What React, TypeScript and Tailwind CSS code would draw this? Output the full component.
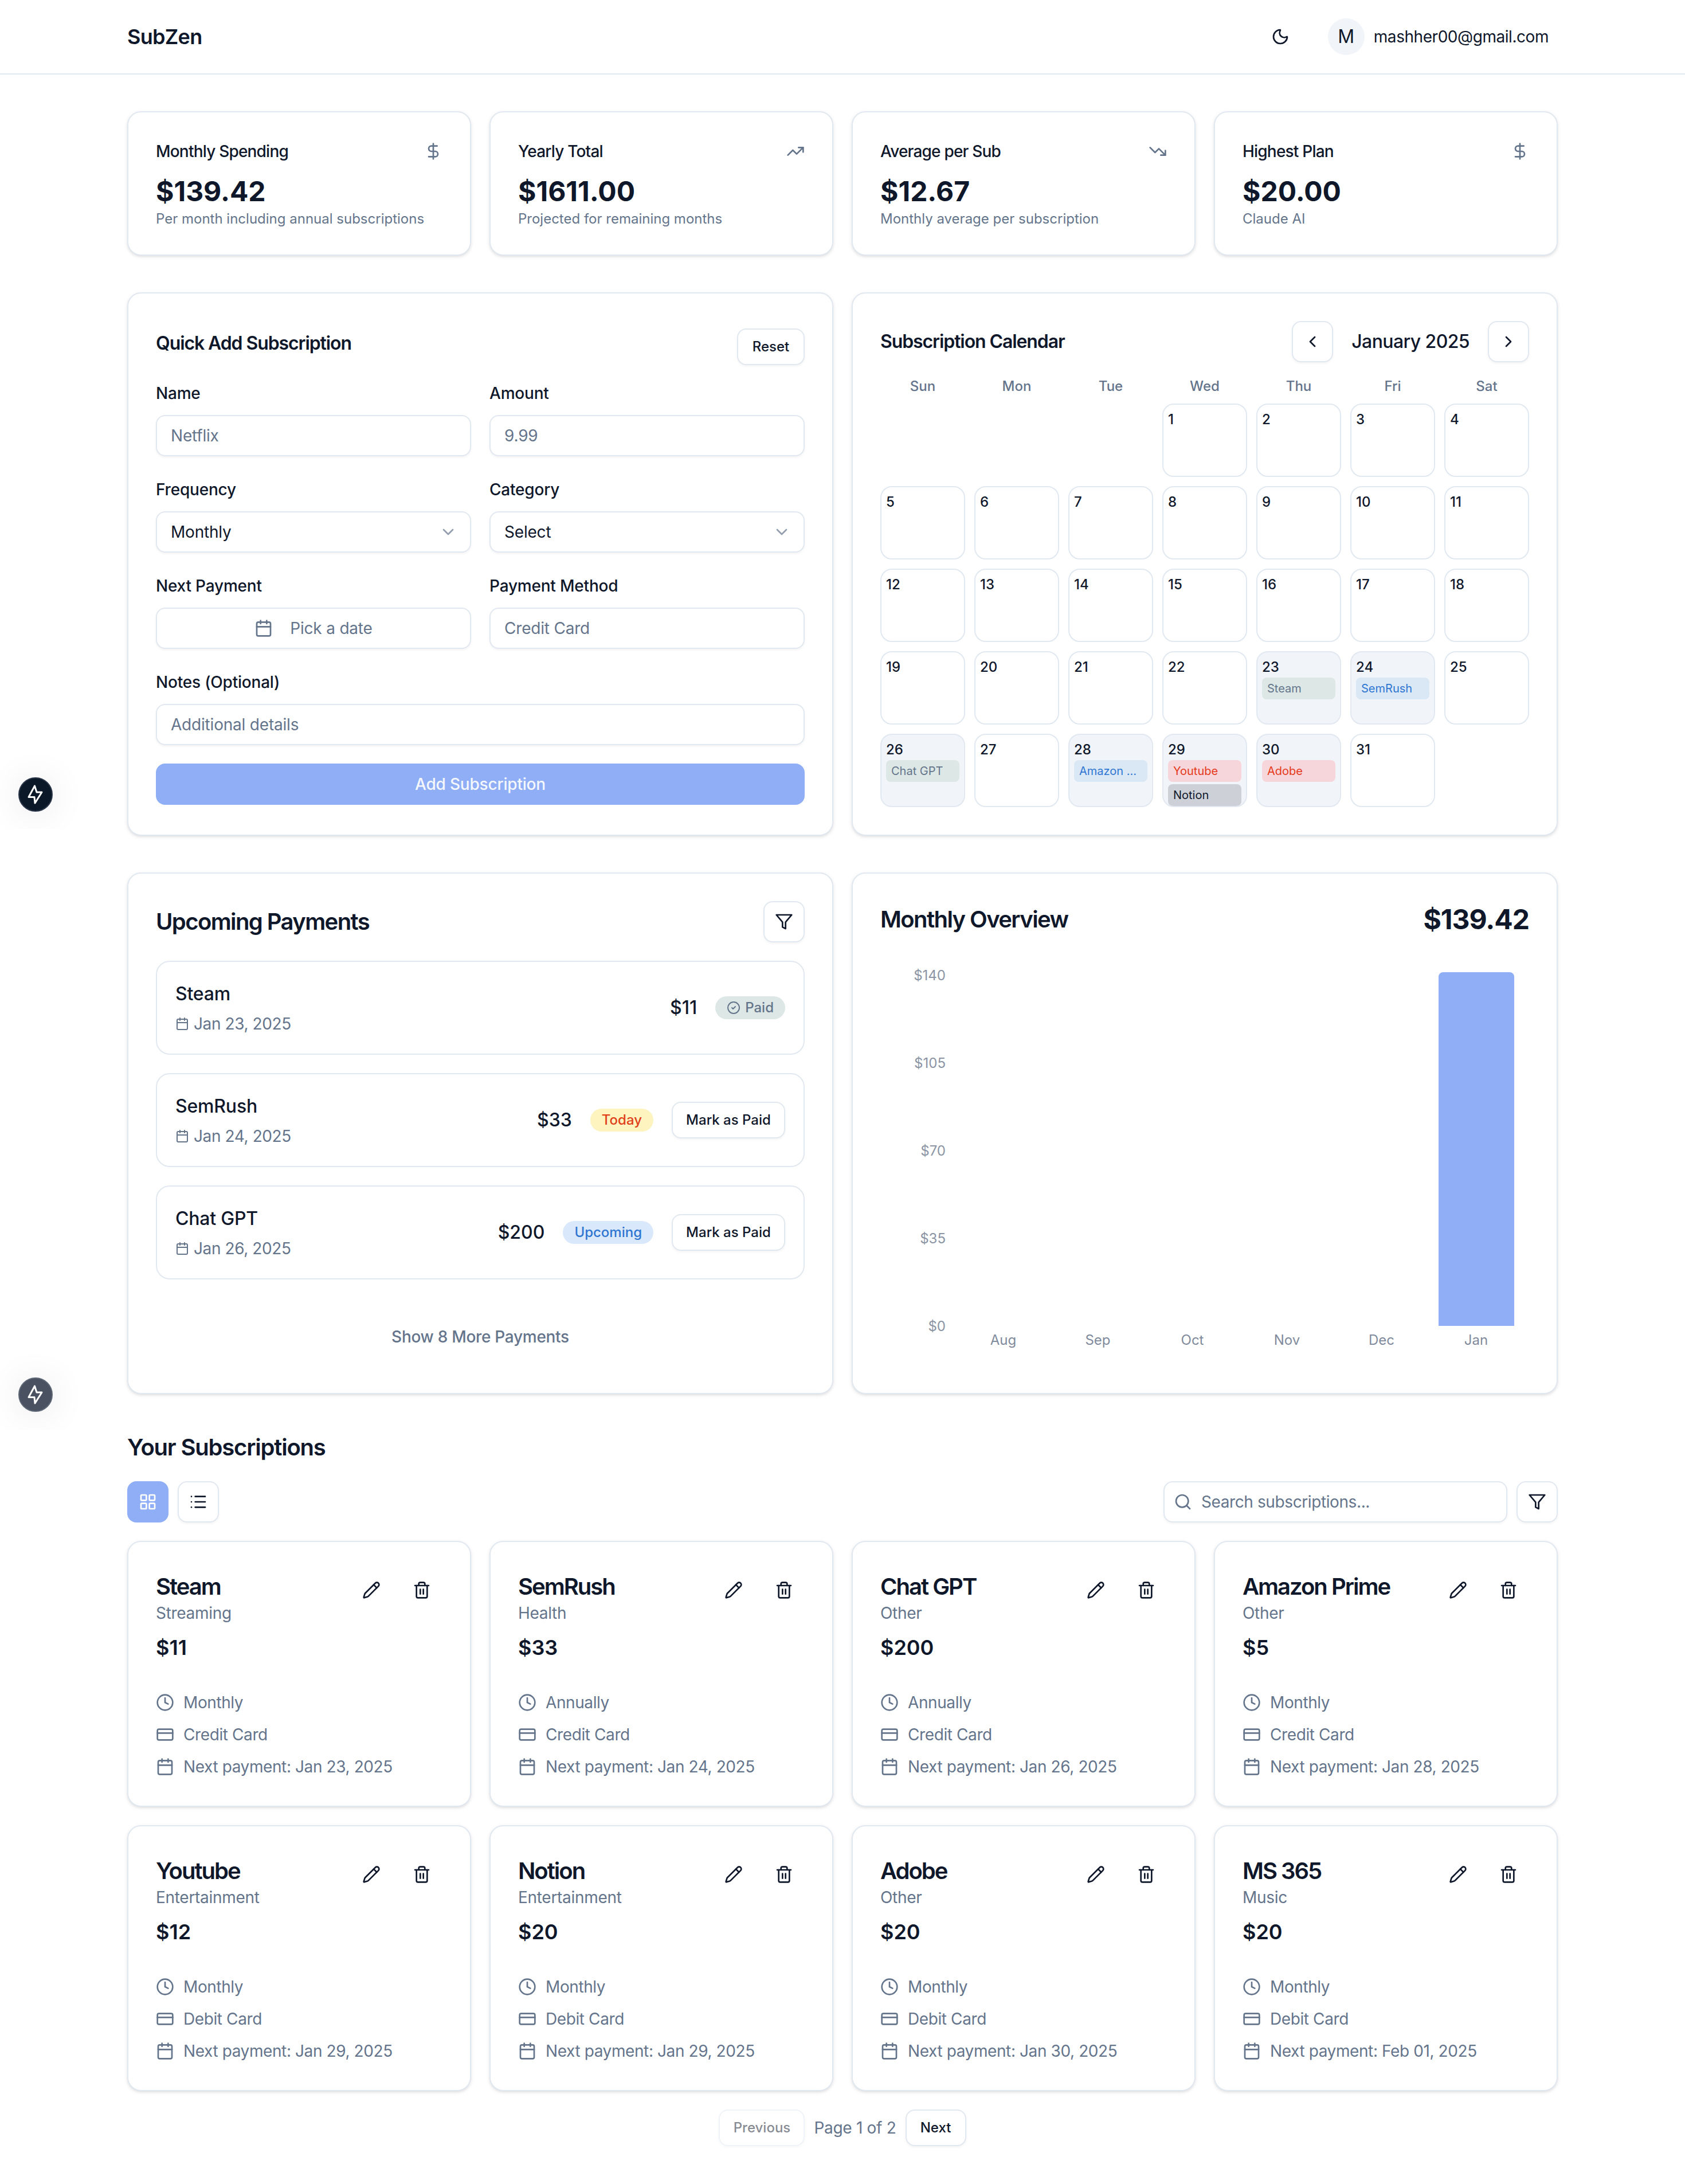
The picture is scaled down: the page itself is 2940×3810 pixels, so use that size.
import {
  Calendar,
  ChevronDown,
  ChevronLeft,
  ChevronRight,
  CircleCheck,
  Clock,
  CreditCard,
  DollarSign,
  LayoutGrid,
  List,
  Moon,
  Pencil,
  Search,
  Trash2,
  TrendingDown,
  TrendingUp,
} from 'lucide-react'

const card = 'rounded-[24px] border-2 border-[#e2e8f0] bg-white shadow-[0_2px_6px_rgba(15,23,42,0.1),0_2px_4px_-2px_rgba(15,23,42,0.1)]'
const control = 'rounded-[16px] border-2 border-[#e2e8f0] bg-white shadow-[0_2px_4px_rgba(15,23,42,0.05)]'
const inputClass = `${control} h-[72px] w-full px-6 text-[28px] tracking-[-0.2px] text-[#0f172a] outline-none placeholder:text-[#64748b]`

const stats = [
  {title: 'Monthly Spending', value: '$139.42', note: 'Per month including annual subscriptions', Icon: DollarSign},
  {title: 'Yearly Total', value: '$1611.00', note: 'Projected for remaining months', Icon: TrendingUp},
  {title: 'Average per Sub', value: '$12.67', note: 'Monthly average per subscription', Icon: TrendingDown},
  {title: 'Highest Plan', value: '$20.00', note: 'Claude AI', Icon: DollarSign},
]

const chipStyles = {
  green: 'bg-[#dde8e6] text-[#64748b]',
  blue: 'bg-[#dae8f6] text-[#2f76d2]',
  red: 'bg-[#f6d6da] text-[#e5391a]',
  gray: 'bg-[#cdd1d7] text-[#0f172a]',
}

const events: Record<number, {name: string; tone: keyof typeof chipStyles}[]> = {
  23: [{name: 'Steam', tone: 'green'}],
  24: [{name: 'SemRush', tone: 'blue'}],
  26: [{name: 'Chat GPT', tone: 'green'}],
  28: [{name: 'Amazon ...', tone: 'blue'}],
  29: [
    {name: 'Youtube', tone: 'red'},
    {name: 'Notion', tone: 'gray'},
  ],
  30: [{name: 'Adobe', tone: 'red'}],
}

const subscriptions = [
  {name: 'Steam', category: 'Streaming', price: '$11', frequency: 'Monthly', method: 'Credit Card', next: 'Jan 23, 2025'},
  {name: 'SemRush', category: 'Health', price: '$33', frequency: 'Annually', method: 'Credit Card', next: 'Jan 24, 2025'},
  {name: 'Chat GPT', category: 'Other', price: '$200', frequency: 'Annually', method: 'Credit Card', next: 'Jan 26, 2025'},
  {name: 'Amazon Prime', category: 'Other', price: '$5', frequency: 'Monthly', method: 'Credit Card', next: 'Jan 28, 2025'},
  {name: 'Youtube', category: 'Entertainment', price: '$12', frequency: 'Monthly', method: 'Debit Card', next: 'Jan 29, 2025'},
  {name: 'Notion', category: 'Entertainment', price: '$20', frequency: 'Monthly', method: 'Debit Card', next: 'Jan 29, 2025'},
  {name: 'Adobe', category: 'Other', price: '$20', frequency: 'Monthly', method: 'Debit Card', next: 'Jan 30, 2025'},
  {name: 'MS 365', category: 'Music', price: '$20', frequency: 'Monthly', method: 'Debit Card', next: 'Feb 01, 2025'},
]

function FilterIcon() {
  return (
    <svg viewBox="0 0 24 24" fill="none" stroke="currentColor" strokeWidth={2} strokeLinecap="round" strokeLinejoin="round" className="h-8 w-8">
      <polygon points="22 3 2 3 10 12.46 10 19 14 21 14 12.46 22 3" />
    </svg>
  )
}

function Bolt({wrapperClass, circleClass}: {wrapperClass: string; circleClass: string}) {
  return (
    <div className={`absolute left-0 h-[161px] w-[180px] overflow-hidden ${wrapperClass}`}>
      <div className={`absolute left-8 top-[70px] flex h-[60px] w-[60px] items-center justify-center rounded-full border-2 shadow-[0_4px_64px_rgba(0,0,0,0.1)] ${circleClass}`}>
        <svg viewBox="0 0 60 60" fill="none" stroke="white" strokeWidth={3} strokeLinejoin="round" className="h-[60px] w-[60px] shrink-0">
          <polygon points="28.5,15 18,34.5 28,34.5 29,45 41,26 32,26" />
        </svg>
      </div>
    </div>
  )
}

function Field({label, children}: {label: string; children: React.ReactNode}) {
  return (
    <div>
      <div className="mb-5 text-[28px] font-medium leading-[36px] tracking-[-0.2px] text-[#0f172a]">{label}</div>
      {children}
    </div>
  )
}

function SelectBox({value}: {value: string}) {
  return (
    <div className={`${control} flex h-[72px] items-center justify-between px-6 text-[28px] tracking-[-0.2px] text-[#0f172a]`}>
      {value}
      <ChevronDown className="-mr-[2px] h-8 w-8 text-[#64748b] opacity-70" />
    </div>
  )
}

function QuickAdd() {
  return (
    <div className={`${card} p-12`}>
      <div className="flex h-[108px] items-start justify-between">
        <h3 className="mt-[15px] text-[32px] font-semibold leading-[48px] tracking-[-1.1px] text-[#0f172a]">Quick Add Subscription</h3>
        <button className={`${control} mt-[13px] h-16 w-[118px] text-[24px] font-medium text-[#0f172a]`}>Reset</button>
      </div>
      <div className="grid grid-cols-2 gap-x-8 gap-y-10">
        <Field label="Name">
          <input className={inputClass} placeholder="Netflix" />
        </Field>
        <Field label="Amount">
          <input className={inputClass} placeholder="9.99" />
        </Field>
        <Field label="Frequency">
          <SelectBox value="Monthly" />
        </Field>
        <Field label="Category">
          <SelectBox value="Select" />
        </Field>
        <Field label="Next Payment">
          <div className={`${control} flex h-[72px] items-center justify-center gap-[30px] text-[28px] tracking-[-0.2px] text-[#64748b]`}>
            <Calendar className="h-8 w-8" />
            Pick a date
          </div>
        </Field>
        <Field label="Payment Method">
          <input className={inputClass} placeholder="Credit Card" />
        </Field>
        <div className="col-span-2">
          <Field label="Notes (Optional)">
            <input className={inputClass} placeholder="Additional details" />
          </Field>
        </div>
      </div>
      <button className="mt-8 h-[72px] w-full rounded-[16px] bg-[#8faef5] text-[28px] font-medium tracking-[-0.2px] text-[#f4f7fe]">Add Subscription</button>
    </div>
  )
}

function CalendarCard() {
  const days: (number | null)[] = [null, null, null, ...Array.from({length: 31}, (_, i) => i + 1)]
  return (
    <div className={`${card} p-12`}>
      <div className="flex h-[72px] items-center justify-between">
        <h3 className="text-[32px] font-semibold tracking-[-1.1px] text-[#0f172a]">Subscription Calendar</h3>
        <div className="flex items-center gap-8">
          <button className={`${control} flex h-[72px] w-[72px] items-center justify-center text-[#0f172a]`}>
            <ChevronLeft className="h-8 w-8" />
          </button>
          <span className="text-[32px] font-medium tracking-[-0.6px] text-[#0f172a]">January 2025</span>
          <button className={`${control} flex h-[72px] w-[72px] items-center justify-center text-[#0f172a]`}>
            <ChevronRight className="h-8 w-8" />
          </button>
        </div>
      </div>
      <div className="mb-[14px] mt-[26px] grid grid-cols-7 gap-4">
        {['Sun', 'Mon', 'Tue', 'Wed', 'Thu', 'Fri', 'Sat'].map((d) => (
          <div key={d} className="text-center text-[24px] font-medium leading-[32px] text-[#64748b]">
            {d}
          </div>
        ))}
      </div>
      <div className="grid grid-cols-7 gap-4">
        {days.map((d, i) =>
          d === null ? (
            <div key={i} />
          ) : (
            <div key={i} className={`h-32 overflow-hidden rounded-[20px] border-2 border-[#e2e8f0] px-2 pt-[10px] ${events[d] ? 'bg-[#f1f5f9]' : 'bg-white'}`}>
              <div className="text-[24px] font-medium leading-[32px] text-[#0f172a]">{d}</div>
              {events[d] && (
                <div className="mt-[2px] flex flex-col gap-1">
                  {events[d].map((e) => (
                    <div key={e.name} className={`h-[38px] shrink-0 truncate rounded-[8px] px-[9px] text-[20px] leading-[38px] ${chipStyles[e.tone]}`}>
                      {e.name}
                    </div>
                  ))}
                </div>
              )}
            </div>
          ),
        )}
      </div>
    </div>
  )
}

function PaymentRow({name, date, amount, badge}: {name: string; date: string; amount: string; badge: React.ReactNode}) {
  return (
    <div className="flex items-center justify-between rounded-[24px] border-2 border-[#e2e8f0] bg-white p-8">
      <div>
        <div className="text-[32px] font-medium leading-[48px] tracking-[-0.2px] text-[#0f172a]">{name}</div>
        <div className="mt-2 flex items-center gap-2 text-[28px] leading-[40px] tracking-[-0.4px] text-[#64748b]">
          <Calendar className="h-6 w-6" />
          {date}
        </div>
      </div>
      <div className="flex items-center gap-8">
        <span className="text-[32px] font-medium text-[#0f172a]">{amount}</span>
        {badge}
      </div>
    </div>
  )
}

function MarkPaid({children}: {children: React.ReactNode}) {
  return (
    <>
      {children}
      <button className={`${control} h-16 w-[198px] text-[24px] font-medium text-[#0f172a]`}>Mark as Paid</button>
    </>
  )
}

function Upcoming() {
  return (
    <div className={`${card} p-12`}>
      <div className="flex h-[72px] items-center justify-between">
        <h2 className="text-[40px] font-semibold tracking-[-1.6px] text-[#0f172a]">Upcoming Payments</h2>
        <button className={`${control} flex h-[72px] w-[72px] items-center justify-center text-[#0f172a]`}>
          <FilterIcon />
        </button>
      </div>
      <div className="mt-8 flex flex-col gap-8">
        <PaymentRow
          name="Steam"
          date="Jan 23, 2025"
          amount="$11"
          badge={
            <span className="flex h-10 items-center gap-2 rounded-full bg-[#dde8e6] px-5 text-[24px] font-medium text-[#64748b]">
              <CircleCheck className="h-6 w-6" />
              Paid
            </span>
          }
        />
        <PaymentRow
          name="SemRush"
          date="Jan 24, 2025"
          amount="$33"
          badge={
            <MarkPaid>
              <span className="flex h-10 items-center rounded-full bg-[#fdf4c0] px-5 text-[24px] font-medium text-[#e0401a]">Today</span>
            </MarkPaid>
          }
        />
        <PaymentRow
          name="Chat GPT"
          date="Jan 26, 2025"
          amount="$200"
          badge={
            <MarkPaid>
              <span className="flex h-10 items-center rounded-full bg-[#d9e8fa] px-5 text-[24px] font-medium text-[#2f76d2]">Upcoming</span>
            </MarkPaid>
          }
        />
      </div>
      <div className="mt-16 flex h-[72px] items-center justify-center text-[28px] font-medium tracking-[-0.3px] text-[#64748b]">Show 8 More Payments</div>
    </div>
  )
}

function Overview() {
  const months = ['Aug', 'Sep', 'Oct', 'Nov', 'Dec', 'Jan']
  return (
    <div className={`${card} h-[910px] p-12`}>
      <div className="flex h-16 items-center justify-between">
        <h2 className="text-[40px] font-semibold tracking-[-1.6px] text-[#0f172a]">Monthly Overview</h2>
        <span className="text-[48px] font-bold tracking-[-1px] text-[#0f172a]">$139.42</span>
      </div>
      <div className="mt-[52px] flex">
        <div className="flex h-[640px] w-[114px] flex-col justify-between text-right text-[24px] leading-[28px] text-[#8b94a3]">
          {['$140', '$105', '$70', '$35', '$0'].map((t) => (
            <div key={t}>{t}</div>
          ))}
        </div>
        <div className="ml-[18px] w-[990px] pt-2">
          <div className="grid h-[617px] grid-cols-6 items-end">
            {months.map((m) => (
              <div key={m} className="flex justify-center">
                {m === 'Jan' && <div className="h-[617px] w-[132px] rounded-t-[8px] bg-[#8faef5]" />}
              </div>
            ))}
          </div>
          <div className="mt-[11px] grid grid-cols-6 text-center text-[24px] leading-[28px] text-[#7f8a9c]">
            {months.map((m) => (
              <div key={m}>{m}</div>
            ))}
          </div>
        </div>
      </div>
    </div>
  )
}

function SubscriptionCard({sub}: {sub: (typeof subscriptions)[number]}) {
  return (
    <div className={`${card} h-[464px] p-12`}>
      <div className="flex items-start justify-between">
        <div className="pt-[2px]">
          <div className="text-[40px] font-semibold leading-[56px] tracking-[-2px] text-[#0f172a]">{sub.name}</div>
          <div className="-mt-[2px] text-[28px] leading-[40px] tracking-[-0.3px] text-[#64748b]">{sub.category}</div>
        </div>
        <div className="flex gap-4 text-[#0f172a]">
          <button className="flex h-[72px] w-[72px] items-center justify-center">
            <Pencil className="h-8 w-8" />
          </button>
          <button className="flex h-[72px] w-[72px] items-center justify-center">
            <Trash2 className="h-8 w-8" />
          </button>
        </div>
      </div>
      <div className="mt-3 text-[36px] font-semibold leading-[56px] text-[#0f172a]">{sub.price}</div>
      <div className="mt-12 flex flex-col gap-4 text-[28px] leading-[40px] tracking-[-0.4px] text-[#64748b]">
        <div className="flex items-center gap-4">
          <Clock className="h-8 w-8" />
          {sub.frequency}
        </div>
        <div className="flex items-center gap-4">
          <CreditCard className="h-8 w-8" />
          {sub.method}
        </div>
        <div className="flex items-center gap-4">
          <Calendar className="h-8 w-8" />
          Next payment: {sub.next}
        </div>
      </div>
    </div>
  )
}

export default function App() {
  return (
    <div className="relative min-h-[3810px] bg-white [font-family:Inter,sans-serif]">
      <header className="h-[130px] border-b-2 border-[#e2e8f0]">
        <div className="mx-auto flex h-full max-w-[2560px] items-center justify-between px-8">
          <span className="text-[36px] font-semibold tracking-[-0.7px] text-[#0f172a]">SubZen</span>
          <div className="flex items-center text-[#0f172a]">
            <button className="flex h-[72px] w-[72px] items-center justify-center">
              <Moon className="h-8 w-8" />
            </button>
            <div className="ml-[47px] flex h-16 w-16 items-center justify-center rounded-full bg-[#f1f5f9] text-[32px]">M</div>
            <span className="ml-4 pr-4 text-[28px] tracking-[-0.45px]">mashher00@gmail.com</span>
          </div>
        </div>
      </header>

      <main className="mx-auto flex max-w-[2560px] flex-col gap-16 px-8 py-16">
        <div className="grid grid-cols-4 gap-8">
          {stats.map(({title, value, note, Icon}) => (
            <div key={title} className={`${card} h-[252px] p-12`}>
              <div className="flex h-10 items-center justify-between">
                <span className="text-[28px] font-medium tracking-[-0.8px] text-[#0f172a]">{title}</span>
                <Icon className="h-8 w-8 text-[#64748b]" />
              </div>
              <div className="mt-[18px] text-[48px] font-bold leading-[64px] text-[#0f172a]">{value}</div>
              <div className="text-[24px] leading-[32px] text-[#64748b]">{note}</div>
            </div>
          ))}
        </div>

        <div className="grid grid-cols-2 gap-8">
          <QuickAdd />
          <CalendarCard />
        </div>

        <div className="grid grid-cols-2 gap-8">
          <Upcoming />
          <Overview />
        </div>

        <section>
          <h2 className="pt-[2px] text-[40px] font-semibold leading-[54px] tracking-[-1.2px] text-[#0f172a]">Your Subscriptions</h2>
          <div className="mt-8 flex items-center justify-between">
            <div className="flex gap-4">
              <button className="flex h-[72px] w-[72px] items-center justify-center rounded-[16px] bg-[#8faef5] text-white">
                <LayoutGrid className="h-8 w-8" />
              </button>
              <button className={`${control} flex h-[72px] w-[72px] items-center justify-center text-[#0f172a]`}>
                <List className="h-8 w-8" />
              </button>
            </div>
            <div className="flex gap-4">
              <div className={`${control} flex h-[72px] w-[600px] items-center gap-4 px-4 text-[#64748b]`}>
                <Search className="h-8 w-8 shrink-0" />
                <input className="w-full text-[28px] tracking-[-0.4px] outline-none placeholder:text-[#64748b]" placeholder="Search subscriptions..." />
              </div>
              <button className={`${control} flex h-[72px] w-[72px] items-center justify-center text-[#0f172a]`}>
                <FilterIcon />
              </button>
            </div>
          </div>
          <div className="mt-8 grid grid-cols-4 gap-8">
            {subscriptions.map((s) => (
              <SubscriptionCard key={s.name} sub={s} />
            ))}
          </div>
          <div className="mt-8 flex items-center justify-center gap-4">
            <button className={`${control} h-16 w-[150px] text-[24px] font-medium text-[#0f172a] opacity-50`}>Previous</button>
            <span className="text-[28px] tracking-[-0.3px] text-[#64748b]">Page 1 of 2</span>
            <button className={`${control} h-16 w-[106px] text-[24px] font-medium text-[#0f172a]`}>Next</button>
          </div>
        </section>
      </main>

      <Bolt wrapperClass="top-[1286px]" circleClass="border-[#2a3648] bg-[#0b1828]" />
      <Bolt wrapperClass="top-[2333px]" circleClass="border-[#5d6675] bg-[#4a5160]" />
    </div>
  )
}
